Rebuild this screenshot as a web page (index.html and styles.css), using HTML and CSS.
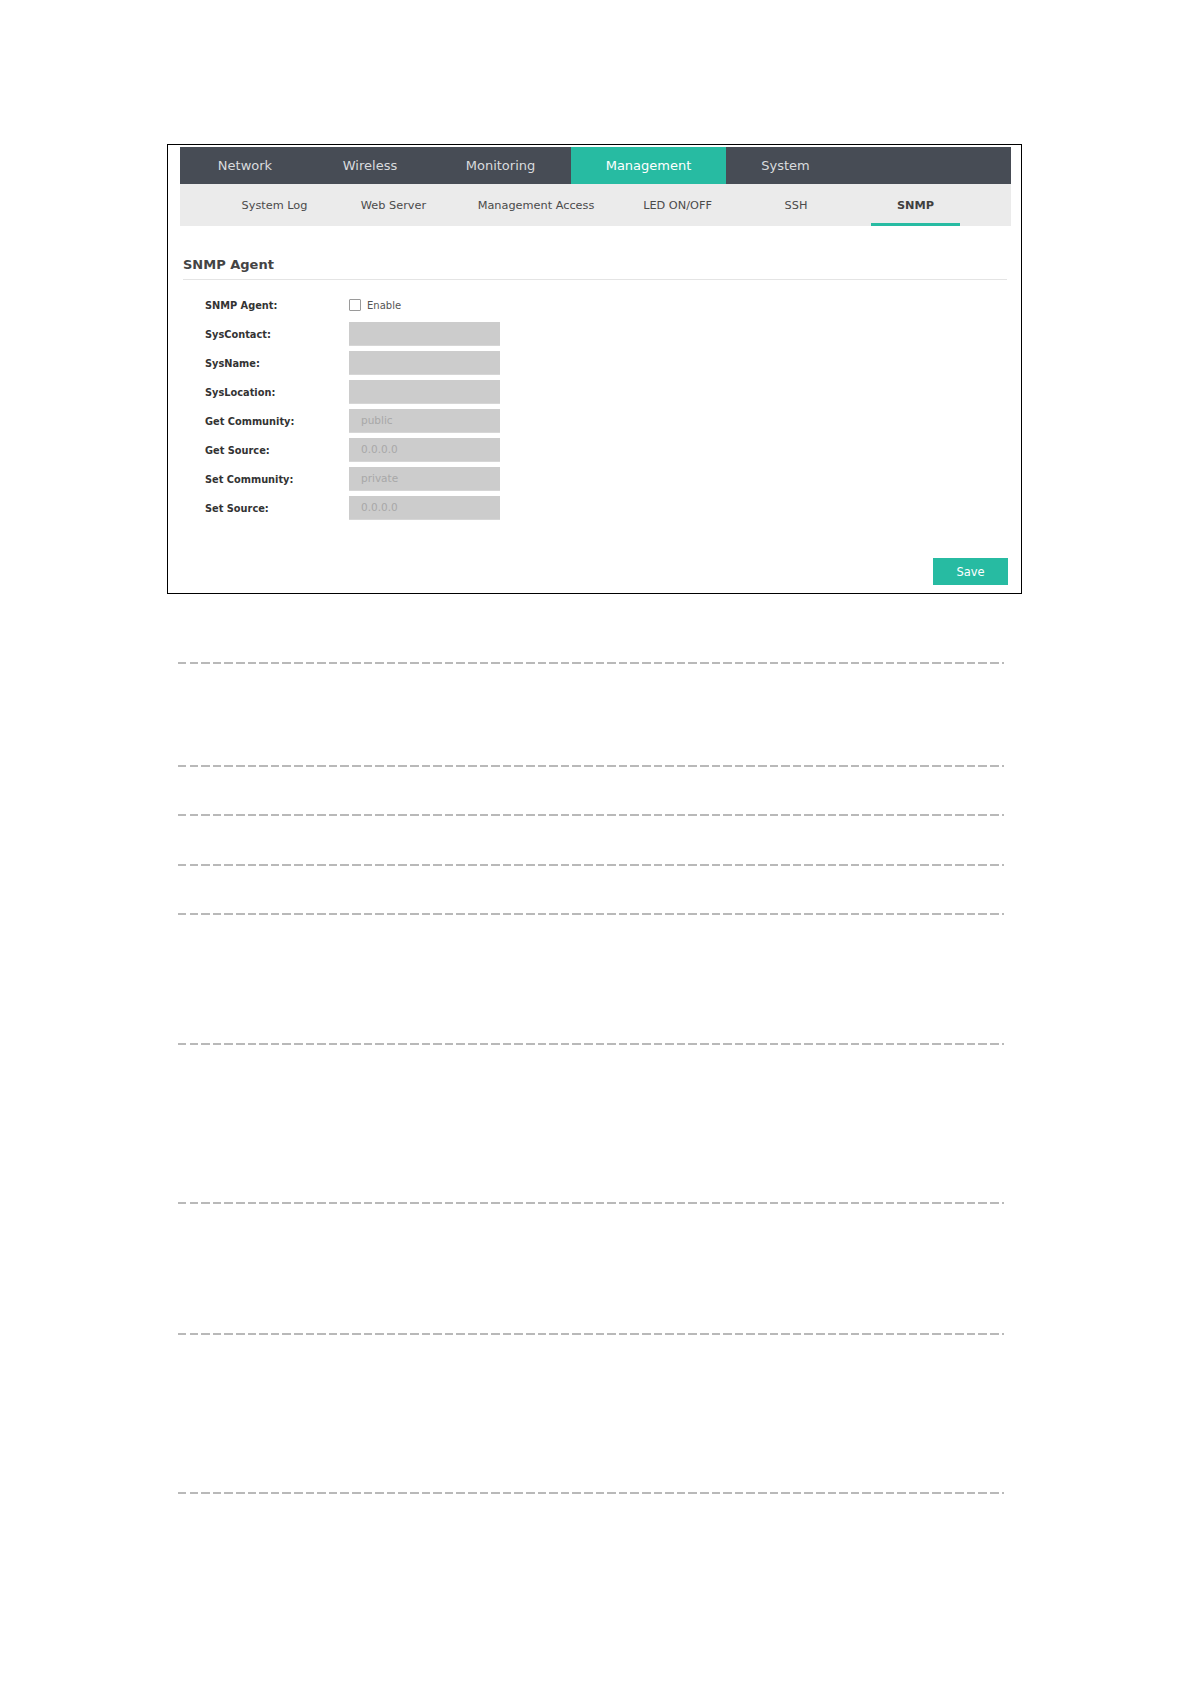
FILE: index.html
```html
<!DOCTYPE html>
<html>
<head>
<meta charset="utf-8">
<title>SNMP</title>
<link rel="stylesheet" href="styles.css">
</head>
<body>
<div class="page">
  <div class="frame">
    <nav class="topnav">
      <div class="tab">Network</div>
      <div class="tab">Wireless</div>
      <div class="tab">Monitoring</div>
      <div class="tab active">Management</div>
      <div class="tab">System</div>
    </nav>
    <nav class="subnav">
      <div class="sub"><span>System Log</span></div>
      <div class="sub"><span>Web Server</span></div>
      <div class="sub"><span>Management Access</span></div>
      <div class="sub"><span>LED ON/OFF</span></div>
      <div class="sub"><span>SSH</span></div>
      <div class="sub active"><span>SNMP</span></div>
    </nav>
    <h2 class="title">SNMP Agent</h2>
    <div class="form">
      <div class="row">
        <div class="label">SNMP Agent:</div>
        <div class="control"><span class="check"></span><span class="check-label">Enable</span></div>
      </div>
      <div class="row">
        <div class="label">SysContact:</div>
        <div class="control"><div class="field"></div></div>
      </div>
      <div class="row">
        <div class="label">SysName:</div>
        <div class="control"><div class="field"></div></div>
      </div>
      <div class="row">
        <div class="label">SysLocation:</div>
        <div class="control"><div class="field"></div></div>
      </div>
      <div class="row">
        <div class="label">Get Community:</div>
        <div class="control"><div class="field">public</div></div>
      </div>
      <div class="row">
        <div class="label">Get Source:</div>
        <div class="control"><div class="field">0.0.0.0</div></div>
      </div>
      <div class="row">
        <div class="label">Set Community:</div>
        <div class="control"><div class="field">private</div></div>
      </div>
      <div class="row">
        <div class="label">Set Source:</div>
        <div class="control"><div class="field">0.0.0.0</div></div>
      </div>
    </div>
    <div class="actions">
      <button class="save">Save</button>
    </div>
  </div>

  <div class="notes">
    <div class="note"></div>
    <div class="note"></div>
    <div class="note"></div>
    <div class="note"></div>
    <div class="note"></div>
    <div class="note"></div>
    <div class="note"></div>
    <div class="note"></div>
    <div class="note"></div>
  </div>
</div>
</body>
</html>
```

FILE: styles.css
```css
* { box-sizing: border-box; }

html, body {
  margin: 0;
  padding: 0;
  background: #ffffff;
}

body {
  font-family: "DejaVu Sans", Verdana, sans-serif;
  color: #333333;
}

.page {
  width: 1191px;
  min-height: 1684px;
  padding-top: 144px;
}

.frame {
  margin-left: 167px;
  width: 855px;
  border: 1px solid #000000;
  padding: 2px 10px 8px 12px;
}

.topnav {
  display: grid;
  grid-template-columns: 130px 120px 141px 155px 119px 1fr;
  height: 37px;
  background: #474c55;
}

.tab {
  line-height: 37px;
  text-align: center;
  font-size: 13px;
  color: #d9dbde;
  white-space: nowrap;
}

.tab.active {
  background: #27bba2;
  color: #ffffff;
}

.subnav {
  display: grid;
  grid-template-columns: 119px 119px 166px 117px 120px 119px;
  padding-left: 35px;
  height: 42px;
  background: #ebebeb;
}

.sub {
  display: flex;
  justify-content: center;
  align-items: stretch;
  font-size: 11.3px;
  color: #4a4a4a;
  white-space: nowrap;
  min-width: 0;
}

.sub span {
  display: flex;
  align-items: center;
  flex-shrink: 0;
  padding: 3px 26px 0;
  border-bottom: 3px solid transparent;
}

.sub.active span {
  font-weight: bold;
  color: #3f3f3f;
  border-bottom-color: #27bba2;
}

.title {
  margin: 0 4px 0 3px;
  padding: 30px 0 5px;
  line-height: 18px;
  font-size: 13px;
  font-weight: bold;
  color: #444444;
  border-bottom: 1px solid #e4e4e4;
}

.form {
  margin-top: 13px;
  padding-left: 25px;
  display: flex;
  flex-direction: column;
  gap: 5px;
}

.row {
  display: grid;
  grid-template-columns: 144px 151px;
  height: 24px;
  align-items: center;
}

.label {
  font-size: 9.8px;
  font-weight: bold;
  color: #333333;
  white-space: nowrap;
}

.control {
  display: flex;
  align-items: center;
  height: 24px;
}

.check {
  width: 12px;
  height: 12px;
  border: 1px solid #9a9a9a;
  background: #ffffff;
  border-radius: 1px;
}

.check-label {
  margin-left: 6px;
  font-size: 10px;
  color: #555555;
}

.field {
  width: 151px;
  height: 24px;
  background: #cccccc;
  border-bottom: 1px solid #d6d6d6;
  padding-left: 12px;
  line-height: 23px;
  font-size: 10.5px;
  color: #a8a8a8;
}

.actions {
  display: flex;
  justify-content: flex-end;
  margin-top: 38px;
  padding-right: 3px;
}

.save {
  width: 75px;
  height: 27px;
  border: none;
  margin: 0;
  padding: 0;
  background: #27bba2;
  color: #ffffff;
  font-family: "DejaVu Sans", Verdana, sans-serif;
  font-size: 11.5px;
}

.notes {
  margin-top: 68px;
  margin-left: 178px;
  width: 826px;
  display: grid;
  grid-template-rows: 103px 49px 50px 49px 130px 159px 131px 159px 2px;
}

.note {
  background-image: repeating-linear-gradient(to right, #b9b9b9 0 8.5px, transparent 8.5px 11.6px);
  background-size: 100% 2px;
  background-repeat: no-repeat;
  background-position: 0 0;
}
```
